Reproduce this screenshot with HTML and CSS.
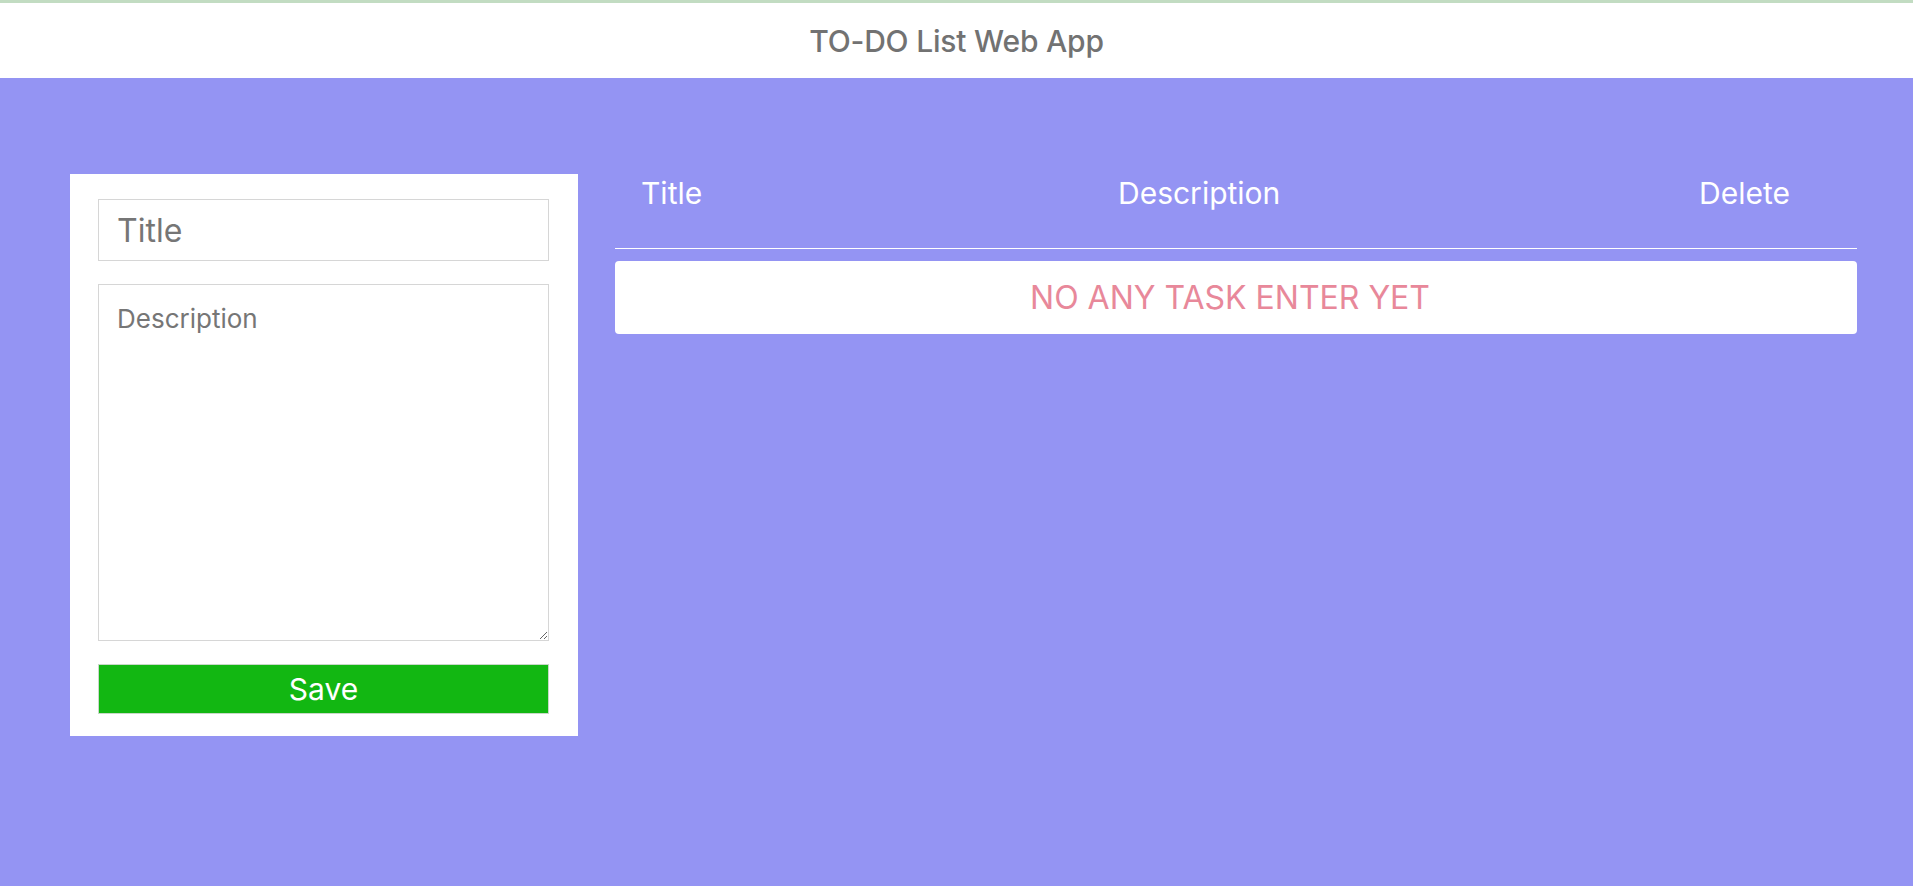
FILE: index.html
```html
<!DOCTYPE html>
<html lang="en">
<head>
<meta charset="utf-8">
<title>TO-DO List Web App</title>
<link rel="stylesheet" href="styles.css">
</head>
<body>
  <header class="app-header">
    <h1 class="app-title">TO-DO List Web App</h1>
  </header>
  <main class="app-main">
    <form class="task-form">
      <input class="field field-title" type="text" placeholder="Title">
      <textarea class="field field-desc" placeholder="Description"></textarea>
      <button class="save-btn" type="button">Save</button>
    </form>
    <section class="task-table">
      <div class="table-head">
        <div class="th th-title">Title</div>
        <div class="th th-desc">Description</div>
        <div class="th th-del">Delete</div>
      </div>
      <div class="empty-row">NO ANY TASK ENTER YET</div>
    </section>
  </main>
</body>
</html>
```

FILE: styles.css
```css
* { box-sizing: border-box; }

html, body {
  margin: 0;
  padding: 0;
}

body {
  background: #9494f3;
  font-family: Inter, "Liberation Sans", sans-serif;
  min-height: 886px;
}

.app-header {
  background: #ffffff;
  border-top: 3px solid #c2dcc2;
  height: 78px;
  display: flex;
  align-items: center;
  justify-content: center;
}

.app-title {
  margin: 0;
  font-size: 30px;
  font-weight: 500;
  color: #727272;
  letter-spacing: -0.2px;
}

.app-main {
  display: flex;
  align-items: flex-start;
  gap: 37px;
  padding: 96px 56px 0 70px;
}

.task-form {
  width: 508px;
  flex: none;
  background: #ffffff;
  padding: 25px 29px 22px 28px;
  display: flex;
  flex-direction: column;
}

.field {
  display: block;
  width: 100%;
  border: 1px solid #d6d6d6;
  border-radius: 0;
  font-family: Inter, "Liberation Sans", sans-serif;
  color: #333;
  outline: none;
  background: #fff;
}

.field::placeholder {
  color: #767676;
}

.field-title {
  height: 62px;
  padding: 0 18px;
  font-size: 32px;
}

.field-desc {
  height: 357px;
  margin-top: 23px;
  padding: 18px 18px;
  font-size: 26px;
  resize: vertical;
}

.save-btn {
  margin-top: 23px;
  height: 50px;
  width: 100%;
  background: #12b712;
  border: 1px solid #c8d8c8;
  color: #ffffff;
  font-family: Inter, "Liberation Sans", sans-serif;
  font-size: 30px;
  padding: 0;
  cursor: pointer;
}

.task-table {
  flex: 1;
  min-width: 0;
}

.table-head {
  display: grid;
  grid-template-columns: 503px auto 1fr;
  height: 75px;
  padding-top: 1px;
  border-bottom: 1px solid #ffffff;
  color: #ffffff;
  font-size: 30px;
  line-height: 36px;
}

.th-title { padding-left: 26px; }
.th-del { text-align: right; padding-right: 67px; }

.empty-row {
  margin-top: 12px;
  height: 73px;
  background: #ffffff;
  border-radius: 4px;
  display: flex;
  align-items: center;
  justify-content: center;
  padding-right: 12px;
  color: #e8889a;
  font-size: 32px;
}
```
